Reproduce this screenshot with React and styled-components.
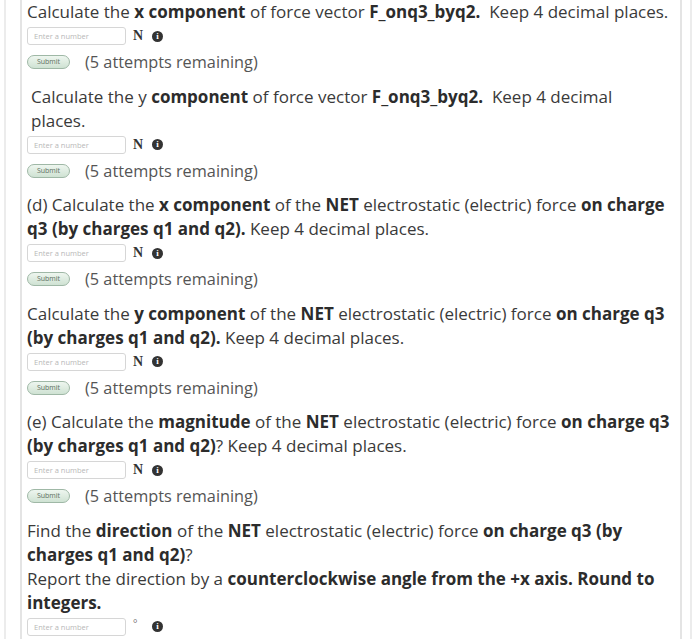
import React from "react";
import styled, { createGlobalStyle } from "styled-components";

const Global = createGlobalStyle`
  html, body {
    margin: 0;
    padding: 0;
    background: #ffffff;
  }
  body {
    font-family: "Open Sans", "Liberation Sans", sans-serif;
    color: #333333;
  }
`;

const Outer = styled.div`
  width: 700px;
  height: 639px;
  overflow: hidden;
  box-sizing: border-box;
  padding: 0 8px 0 4px;
  background: #ffffff;
`;

const Frame = styled.div`
  height: 100%;
  box-sizing: border-box;
  border-left: 2px solid #ececec;
  border-right: 2px solid #ececec;
  padding: 0 8px 0 14px;
`;

const Panel = styled.div`
  height: 100%;
  box-sizing: border-box;
  border-left: 2px solid #e4e4e4;
  border-right: 2px solid #e4e4e4;
  padding: 0 6px 0 5px;
`;

const Part = styled.div`
  padding-top: ${(p) => p.$top || 0}px;
  padding-bottom: 7.6px;
`;

const Prompt = styled.p`
  margin: 0;
  font-size: 17px;
  line-height: 24px;
  color: #3a3a3a;
  padding-left: ${(p) => (p.$indent ? 4 : 0)}px;

  b {
    font-weight: 700;
    color: #2c2c2c;
  }
`;

const AnswerRow = styled.div`
  display: flex;
  align-items: center;
  gap: 7px;
  margin-top: 2px;
  height: 20px;
`;

const NumberInput = styled.input`
  width: 99px;
  height: 18px;
  box-sizing: border-box;
  border: 1px solid #d6d6d6;
  border-radius: 3px;
  padding: 0 6px;
  font-family: "Open Sans", "Liberation Sans", sans-serif;
  font-size: 7.5px;
  color: #555;
  background: #fff;
  outline: none;

  &::placeholder {
    color: #b8b8b8;
  }
`;

const Unit = styled.span`
  font-family: "Liberation Serif", "DejaVu Serif", serif;
  font-size: 14px;
  font-weight: 700;
  color: #333;
  width: 12px;
  line-height: 1;
`;

const Degree = styled.span`
  font-family: "Liberation Serif", serif;
  font-size: 11px;
  color: #555;
  width: 12px;
  line-height: 1;
  margin-top: -6px;
`;

const InfoDot = styled.span`
  display: inline-flex;
  align-items: center;
  justify-content: center;
  width: 11px;
  height: 11px;
  border-radius: 50%;
  background: #333;
  color: #fff;
  font-family: "Liberation Serif", serif;
  font-weight: 700;
  font-size: 9px;
  line-height: 1;
`;

const SubmitRow = styled.div`
  display: flex;
  align-items: center;
  gap: 15px;
  margin-top: 4px;
`;

const SubmitButton = styled.button`
  width: 43px;
  height: 14px;
  padding: 0;
  border: 1px solid #9fb8a6;
  border-radius: 8px;
  background: linear-gradient(#eef6ef, #cfe2d3);
  color: #5c6f61;
  font-family: "Open Sans", "Liberation Sans", sans-serif;
  font-size: 7px;
  line-height: 12px;
`;

const Attempts = styled.span`
  font-size: 16.3px;
  line-height: 24px;
  color: #555555;
`;

function Answer({ unit }) {
  return (
    <AnswerRow>
      <NumberInput placeholder="Enter a number" />
      {unit === "deg" ? <Degree>°</Degree> : <Unit>{unit}</Unit>}
      <InfoDot>i</InfoDot>
    </AnswerRow>
  );
}

function Submit() {
  return (
    <SubmitRow>
      <SubmitButton>Submit</SubmitButton>
      <Attempts>(5 attempts remaining)</Attempts>
    </SubmitRow>
  );
}

export default function App() {
  return (
    <Outer>
      <Global />
      <Frame>
        <Panel>
          <Part>
            <Prompt>
              Calculate the <b>x component</b> of force vector{" "}
              <b>F_onq3_byq2.</b>&nbsp; Keep 4 decimal places.
            </Prompt>
            <Answer unit="N" />
            <Submit />
          </Part>

          <Part $top={3}>
            <Prompt $indent>
              Calculate the y <b>component</b> of force vector{" "}
              <b>F_onq3_byq2.</b>&nbsp; Keep 4 decimal
              <br />
              places.
            </Prompt>
            <Answer unit="N" />
            <Submit />
          </Part>

          <Part $top={3}>
            <Prompt>
              (d) Calculate the <b>x component</b> of the <b>NET</b>{" "}
              electrostatic (electric) force <b>on charge q3 (by charges q1 and q2).</b>{" "}
              Keep 4 decimal places.
            </Prompt>
            <Answer unit="N" />
            <Submit />
          </Part>

          <Part $top={3}>
            <Prompt>
              Calculate the <b>y component</b> of the <b>NET</b> electrostatic
              (electric) force <b>on charge q3 (by charges q1 and q2).</b> Keep 4
              decimal places.
            </Prompt>
            <Answer unit="N" />
            <Submit />
          </Part>

          <Part $top={3}>
            <Prompt>
              (e) Calculate the <b>magnitude</b> of the <b>NET</b> electrostatic
              (electric) force <b>on charge q3 (by charges q1 and q2)</b>? Keep 4
              decimal places.
            </Prompt>
            <Answer unit="N" />
            <Submit />
          </Part>

          <Part $top={3}>
            <Prompt>
              Find the <b>direction</b> of the <b>NET</b> electrostatic (electric)
              force <b>on charge q3 (by charges q1 and q2)</b>?
            </Prompt>
            <Prompt>
              Report the direction by a{" "}
              <b>counterclockwise angle from the +x axis. Round to integers.</b>
            </Prompt>
            <Answer unit="deg" />
          </Part>
        </Panel>
      </Frame>
    </Outer>
  );
}
